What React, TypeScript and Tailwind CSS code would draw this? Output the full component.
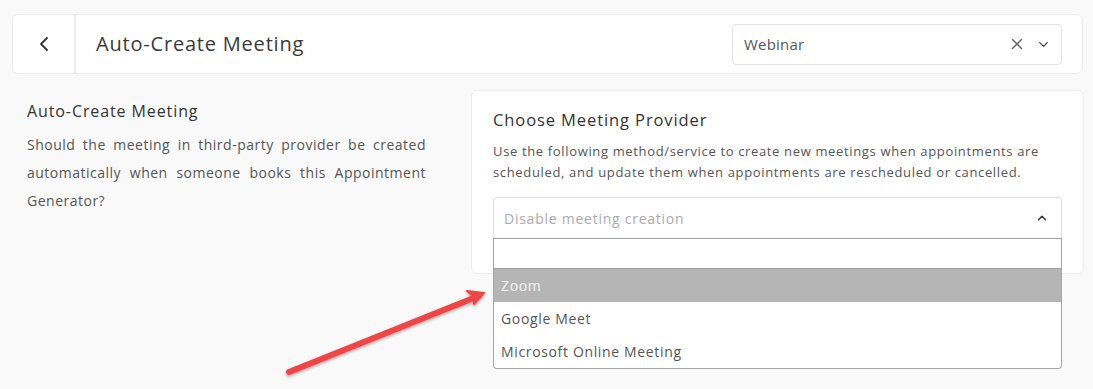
import { ChevronDown, ChevronLeft, ChevronUp, X } from 'lucide-react'

const font = { fontFamily: '"Open Sans", "Liberation Sans", sans-serif' }

function Header() {
  return (
    <div className="mx-[12px] mr-[10px] flex h-[60px] items-stretch rounded-[6px] border border-[#ebebeb] bg-white">
      <div className="flex w-[63px] items-center justify-center border-r-2 border-[#eeeeee]">
        <ChevronLeft className="h-[24px] w-[24px] text-[#333]" strokeWidth={1.8} />
      </div>
      <div className="flex flex-1 items-center pl-[20px] text-[20px] tracking-[0.8px] text-[#3a3a3a]">
        Auto-Create Meeting
      </div>
      <div className="flex items-center pr-[20px]">
        <div className="flex h-[41px] w-[330px] items-center rounded-[4px] border border-[#e3e3e3] pl-[11px] pr-[10px]">
          <span className="flex-1 text-[15px] tracking-[0.2px] text-[#555]">Webinar</span>
          <X className="h-[18px] w-[18px] text-[#666]" strokeWidth={2} />
          <ChevronDown className="ml-[10px] h-[15px] w-[15px] text-[#444]" strokeWidth={2.2} />
        </div>
      </div>
    </div>
  )
}

const options = ['Zoom', 'Google Meet', 'Microsoft Online Meeting']

function ProviderCard() {
  return (
    <div className="relative h-[184px] w-[613px] rounded-[6px] border border-[#ededed] bg-white px-[21px] pt-[18px]">
      <div className="text-[16.5px] leading-[22px] tracking-[0.9px] text-[#333]">Choose Meeting Provider</div>
      <p className="mt-[10px] text-[13px] leading-[21px] tracking-[0.65px] text-[#555]">
        Use the following method/service to create new meetings when appointments are scheduled, and update them
        when appointments are rescheduled or cancelled.
      </p>
      <div className="relative mt-[14px]">
        <div className="flex h-[42px] items-center rounded-t-[4px] border border-[#dddddd] border-b-[#aaaaaa] pl-[10px] pr-[12px]">
          <span className="flex-1 text-[14px] tracking-[0.75px] text-[#aaa]">Disable meeting creation</span>
          <ChevronUp className="h-[14px] w-[14px] text-[#333]" strokeWidth={2.5} />
        </div>
        <div className="absolute left-0 right-0 top-[41px] z-10 rounded-b-[4px] border border-t-0 border-[#a5a5a5] bg-white">
          <div className="h-[31px] border border-[#a0a0a0] border-l-0 border-r-0 bg-white" />
          {options.map((o, i) => (
            <div
              key={o}
              className={
                i === 0
                  ? 'flex h-[33px] items-center bg-[#b5b5b5] pl-[7px] text-[14px] tracking-[0.65px] text-[#f5f5f5]'
                  : 'flex h-[33px] items-center pl-[7px] text-[14px] tracking-[0.65px] text-[#555]'
              }
            >
              {o}
            </div>
          ))}
        </div>
      </div>
    </div>
  )
}

function Arrow() {
  return (
    <svg className="pointer-events-none absolute left-0 top-0 z-20" width="1093" height="389">
      <defs>
        <filter id="sh" x="-10%" y="-30%" width="120%" height="160%">
          <feDropShadow dx="0" dy="1.5" stdDeviation="1.5" floodColor="#000" floodOpacity="0.35" />
        </filter>
      </defs>
      <g filter="url(#sh)">
        <line x1="289" y1="372" x2="476" y2="297" stroke="#f04545" strokeWidth="6" strokeLinecap="round" />
        <path d="M484 293 L467 291 L473 296 L474 304 Z" fill="#f04545" stroke="#f04545" strokeWidth="2" strokeLinejoin="round" />
      </g>
    </svg>
  )
}

export default function App() {
  return (
    <div className="relative h-[389px] w-full overflow-hidden bg-[#f9f9f9] pt-[14px]" style={font}>
      <Header />
      <div className="mt-[16px] flex">
        <div className="ml-[27px] w-[399px] pt-[9px]">
          <div className="text-[16px] leading-[24px] tracking-[0.9px] text-[#333]">Auto-Create Meeting</div>
          <p className="mt-[8px] text-justify text-[14px] leading-[28px] tracking-[0.5px] text-[#555]">
            Should the meeting in third-party provider be created automatically when someone books this Appointment
            Generator?
          </p>
        </div>
        <div className="ml-[45px]">
          <ProviderCard />
        </div>
      </div>
      <Arrow />
    </div>
  )
}
